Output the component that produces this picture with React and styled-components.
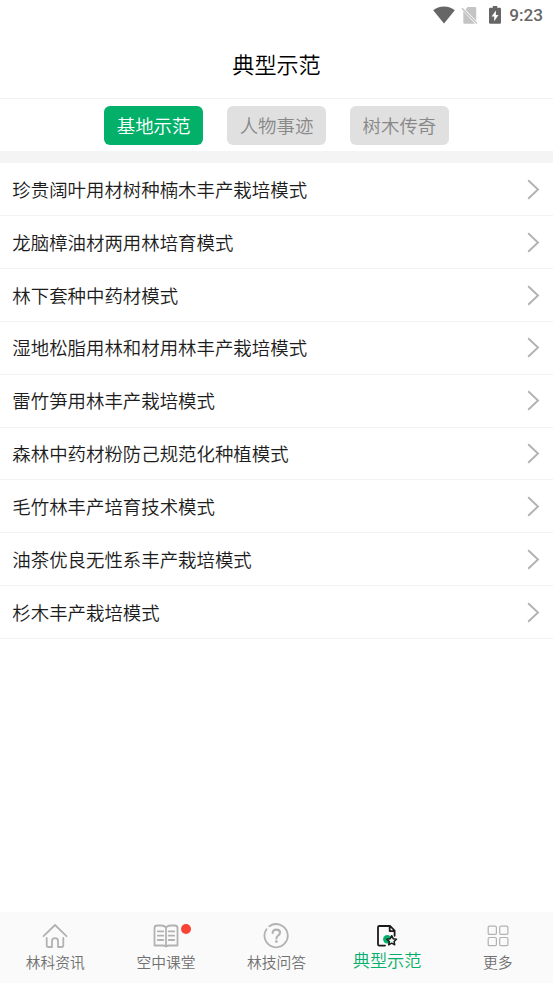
import React from "react";
import styled, { createGlobalStyle } from "styled-components";

const tabs = ["基地示范", "人物事迹", "树木传奇"];

const articles = [
	"珍贵阔叶用材树种楠木丰产栽培模式",
	"龙脑樟油材两用林培育模式",
	"林下套种中药材模式",
	"湿地松脂用林和材用林丰产栽培模式",
	"雷竹笋用林丰产栽培模式",
	"森林中药材粉防己规范化种植模式",
	"毛竹林丰产培育技术模式",
	"油茶优良无性系丰产栽培模式",
	"杉木丰产栽培模式",
];

const navItems = [
	{ label: "林科资讯", icon: <HomeIcon /> },
	{ label: "空中课堂", icon: <BookIcon />, badge: true },
	{ label: "林技问答", icon: <QuestionIcon /> },
	{ label: "典型示范", icon: <DocStarIcon />, active: true },
	{ label: "更多", icon: <MoreIcon /> },
];

export default function App() {
	return (
		<Screen>
			<GlobalStyle />
			<StatusBar>
				<WifiIcon />
				<NoSimIcon />
				<BatteryIcon />
				<Clock>9:23</Clock>
			</StatusBar>
			<Header>典型示范</Header>
			<TabBar>
				{tabs.map((tab, i) => (
					<Tab key={tab} $active={i === 0}>
						{tab}
					</Tab>
				))}
			</TabBar>
			<List>
				{articles.map((title) => (
					<Row key={title}>
						<RowTitle>{title}</RowTitle>
						<Chevron />
					</Row>
				))}
			</List>
			<BottomNav>
				{navItems.map((item) => (
					<NavItem key={item.label}>
						<NavIcon>
							{item.icon}
							{item.badge && <Badge />}
						</NavIcon>
						<NavLabel $active={item.active}>{item.label}</NavLabel>
					</NavItem>
				))}
			</BottomNav>
		</Screen>
	);
}

function WifiIcon() {
	return (
		<svg width="22" height="18" viewBox="0 0 22 18">
			<path d="M0.2 4.2C3 1.9 6.7 0.5 11 0.5s8 1.4 10.8 3.7L11 17.4z" fill="#666" />
		</svg>
	);
}

function NoSimIcon() {
	return (
		<SimSvg width="17" height="19" viewBox="0 0 17 19">
			<path d="M6.6 1h7.4q1.200 0 1.200 1.200v12.600L4.500 3.700z" fill="#c4c4c4" />
			<path d="M2.300 5v11.600q0 1.200 1.200 1.200h10.500z" fill="#c4c4c4" />
			<path d="M1 2.200l15 15.300" stroke="#c4c4c4" strokeWidth="1.5" />
		</SimSvg>
	);
}

function BatteryIcon() {
	return (
		<BatterySvg width="12" height="18" viewBox="0 0 12 18">
			<path d="M3.800 0h4.400v1.700h2.600q1.200 0 1.200 1.200v13.700q0 1.200-1.200 1.200H1.200Q0 17.800 0 16.600V2.900q0-1.200 1.200-1.200h2.600z" fill="#666" />
			<path d="M6.900 4.600L2.600 10.600h2.600v4.600l4.300-6.300H6.900z" fill="#fff" />
		</BatterySvg>
	);
}

function Chevron() {
	return (
		<svg width="13" height="21" viewBox="0 0 13 21">
			<path d="M1.200 1.200l9.800 9.300-9.800 9.300" fill="none" stroke="#b2b2b2" strokeWidth="1.900" />
		</svg>
	);
}

function HomeIcon() {
	return (
		<NavSvg>
			<path d="M2.500 14.200L14 3l11.500 11.200" />
			<path d="M5.700 16v7.200q0 1.800 1.800 1.800h3.500v-6q0-2.800 3-2.800t3 2.800v6h3.500q1.800 0 1.800-1.800V16" />
		</NavSvg>
	);
}

function BookIcon() {
	return (
		<NavSvg>
			<path d="M14 5.300Q12 3.500 9.500 3.500H5.200q-2.700 0-2.700 2.500v17.500h8.200q2 0 3.300 1 1.300-1 3.300-1h8.200V6q0-2.500-2.700-2.500h-4.300q-2.500 0-4.500 1.800v18" />
			<path d="M5.800 9.400h5.500M5.800 13.700h5.500M5.800 18h5.500M16.700 9.400h5.500M16.700 13.700h5.500M16.700 18h5.500" />
		</NavSvg>
	);
}

function QuestionIcon() {
	return (
		<NavSvg>
			<path d="M3.800 7.500A11.600 11.600 0 1 0 6.600 4.600" transform="translate(.7 -.3)" />
			<path d="M10.600 11q0-3.400 3.700-3.400t3.700 3q0 1.700-1.800 2.900-1.800 1.200-1.800 3" strokeWidth="2.100" />
			<circle cx="14.400" cy="19.600" r="1.400" fill="#b2b2b2" stroke="none" />
		</NavSvg>
	);
}

function DocStarIcon() {
	return (
		<NavSvg $color="#1b1b1b">
			<circle cx="14.300" cy="17.200" r="4.200" fill="#03b069" stroke="none" />
			<path d="M12 23.600H6.300Q5 23.600 5 22.300V5.300Q5 4 6.300 4h10.900l4.400 4.600v5.200M16.700 4.300v4.800h4.700" />
			<path
				d="M18.700 13.700l1.500 3 3.300.5-2.400 2.300.6 3.300-3-1.600-3 1.600.6-3.300-2.400-2.300 3.300-.5z"
				fill="#e4f5ec"
				strokeWidth="1.5"
			/>
		</NavSvg>
	);
}

function MoreIcon() {
	return (
		<NavSvg $thin>
			<rect x="4.200" y="4.200" width="8.200" height="8.200" rx="1.200" />
			<rect x="15.700" y="4.200" width="8.200" height="8.200" rx="1.200" />
			<rect x="4.200" y="15.500" width="8.200" height="8.200" rx="1.200" />
			<rect x="15.700" y="15.500" width="8.200" height="8.200" rx="1.200" />
		</NavSvg>
	);
}

const GlobalStyle = createGlobalStyle`
	body {
		margin: 0;
		background-color: #fff;
		font-family: "Noto Sans CJK SC", sans-serif;
		font-weight: 350;
	}
	* {
		box-sizing: border-box;
	}
`;

const Screen = styled.div`
	height: 100vh;
	display: flex;
	flex-direction: column;
	overflow: hidden;
`;

const StatusBar = styled.div`
	flex: none;
	height: 30px;
	padding: 0 10px 0 0;
	display: flex;
	justify-content: flex-end;
	align-items: center;
`;

const SimSvg = styled.svg`
	margin-left: 6px;
`;

const BatterySvg = styled.svg`
	margin-left: 11px;
`;

const Clock = styled.span`
	margin-left: 8px;
	color: #666;
	font-family: Roboto, sans-serif;
	font-size: 17.2px;
	font-weight: 500;
	line-height: 30px;
`;

const Header = styled.header`
	flex: none;
	height: 69.4px;
	border-bottom: 1px solid #f2f2f2;
	color: #000;
	font-size: 22.1px;
	line-height: 66px;
	text-align: center;
`;

const TabBar = styled.div`
	flex: none;
	height: 64px;
	padding-top: 6.3px;
	border-bottom: 12px solid #f4f4f4;
	display: flex;
	justify-content: center;
	gap: 24.4px;
`;

const Tab = styled.button`
	width: 98.5px;
	height: 39.3px;
	padding: 0;
	border: none;
	border-radius: 6px;
	background-color: ${(props) => (props.$active ? "#03b069" : "#e0e0e0")};
	color: ${(props) => (props.$active ? "#fff" : "#888")};
	font-family: inherit;
	font-weight: inherit;
	font-size: 18.43px;
	line-height: 39px;
`;

const List = styled.main`
	flex: 1;
`;

const Row = styled.div`
	height: 52.85px;
	padding: 0 13px 0 12.3px;
	border-bottom: 1px solid #f3f3f3;
	display: flex;
	justify-content: space-between;
	align-items: center;
`;

const RowTitle = styled.span`
	padding-bottom: 1px;
	color: #1c1c1c;
	font-size: 18.43px;
	line-height: 28px;
`;

const BottomNav = styled.nav`
	flex: none;
	height: 71.5px;
	background-color: #fafafa;
	display: flex;
`;

const NavItem = styled.div`
	flex: 1;
	padding-top: 10px;
	display: flex;
	flex-direction: column;
	align-items: center;
`;

const NavIcon = styled.div`
	position: relative;
	height: 28px;
`;

const NavSvg = styled.svg.attrs({ width: 28, height: 28, viewBox: "0 0 28 28" })`
	display: block;
	fill: none;
	stroke: ${(props) => props.$color || "#b2b2b2"};
	stroke-width: ${(props) => (props.$thin ? 1.2 : 1.8)};
	stroke-linecap: round;
	stroke-linejoin: round;
`;

const Badge = styled.span`
	position: absolute;
	top: 2px;
	right: -10.7px;
	width: 10px;
	height: 10px;
	border-radius: 50%;
	background-color: #f84335;
`;

const NavLabel = styled.span`
	color: ${(props) => (props.$active ? "#03b069" : "#707070")};
	font-size: ${(props) => (props.$active ? "17.2px" : "14.75px")};
	line-height: ${(props) => (props.$active ? "20px" : "24px")};
`;
